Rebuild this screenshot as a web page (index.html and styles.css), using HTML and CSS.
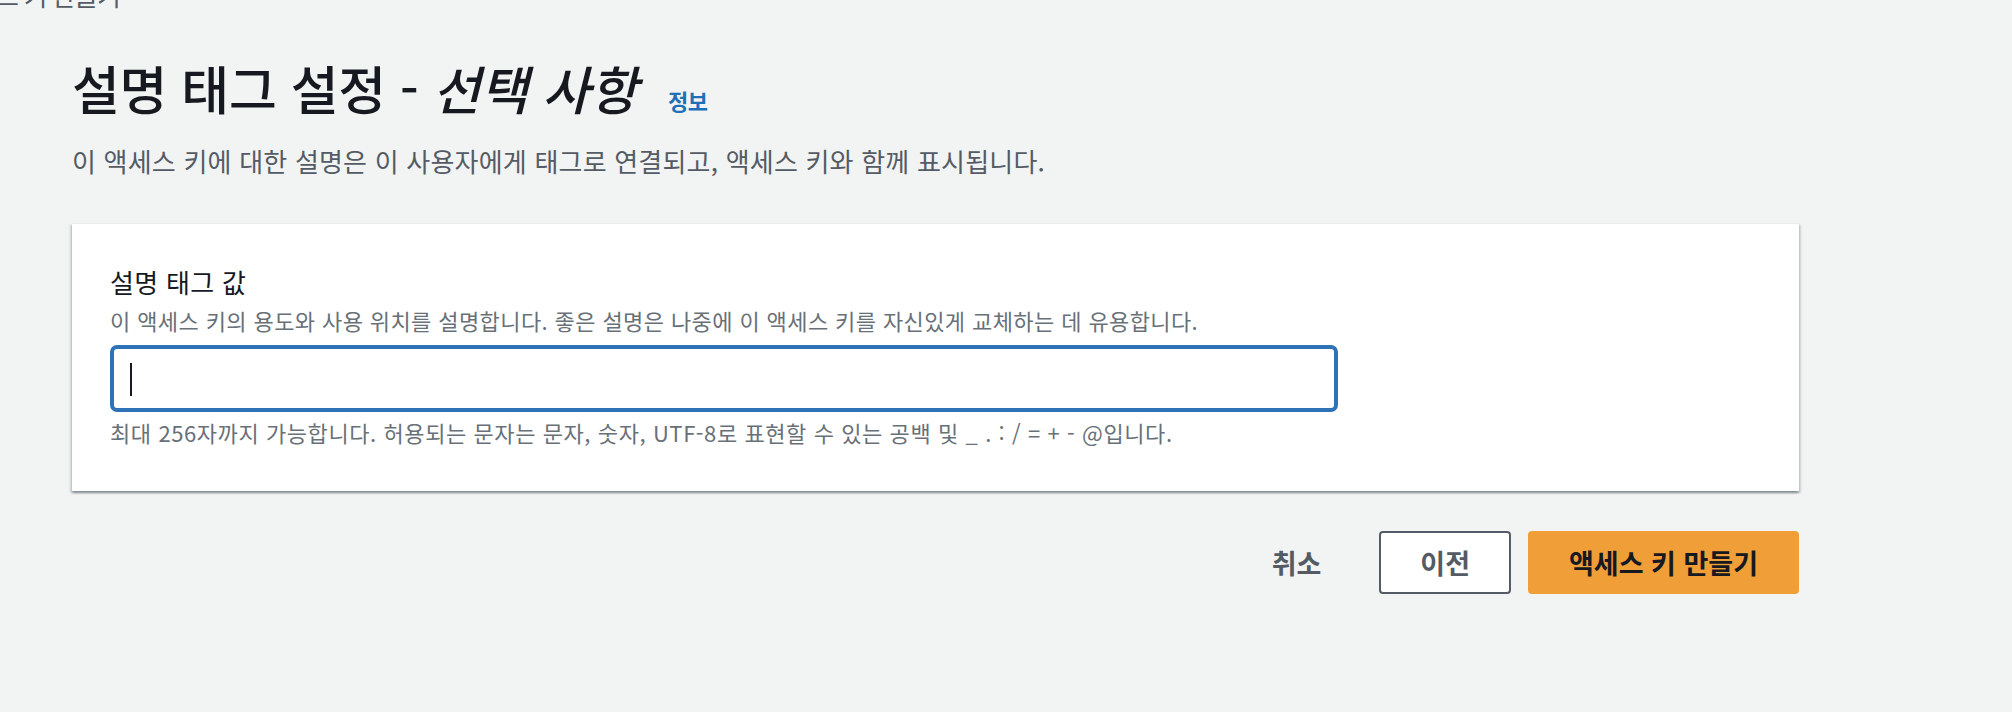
FILE: index.html
```html
<!DOCTYPE html>
<html lang="ko">
<head>
<meta charset="utf-8">
<title>설명 태그 설정</title>
<link rel="stylesheet" href="styles.css">
</head>
<body>
<div class="crumb">액세스 키 만들기</div>
<main class="page">
  <header class="page-header">
    <h1 class="title">설명 태그 설정 - <em class="optional">선택 사항</em><a class="info" href="#">정보</a></h1>
    <p class="lead">이 액세스 키에 대한 설명은 이 사용자에게 태그로 연결되고, 액세스 키와 함께 표시됩니다.</p>
  </header>
  <section class="card">
    <div class="field">
      <label class="label">설명 태그 값</label>
      <p class="desc">이 액세스 키의 용도와 사용 위치를 설명합니다. 좋은 설명은 나중에 이 액세스 키를 자신있게 교체하는 데 유용합니다.</p>
      <div class="input"><span class="caret"></span></div>
      <p class="hint">최대 256자까지 가능합니다. 허용되는 문자는 문자, 숫자, UTF-8로 표현할 수 있는 공백 및 _ . : / = + - @입니다.</p>
    </div>
  </section>
  <div class="actions">
    <button class="btn btn-link" type="button">취소</button>
    <button class="btn btn-normal" type="button">이전</button>
    <button class="btn btn-primary" type="button">액세스 키 만들기</button>
  </div>
</main>
</body>
</html>
```
FILE: styles.css
```css
html, body {
  margin: 0;
  padding: 0;
}
body {
  background: #f2f3f3;
  font-family: "Noto Sans CJK KR", "Noto Sans", sans-serif;
  color: #16191f;
  overflow: hidden;
}
.crumb {
  margin: -21px 0 0 -50px;
  font-size: 26px;
  line-height: 32px;
  letter-spacing: -1.4px;
  color: #545b64;
  white-space: nowrap;
}
.page {
  margin-left: 72px;
  width: 1727px;
}
.page-header {
  padding-top: 45px;
}
.title {
  margin: 0;
  font-size: 52px;
  line-height: 64px;
  font-weight: 500;
  letter-spacing: -0.3px;
  color: #16191f;
}
.optional {
  font-style: italic;
}
.info {
  margin-left: 31px;
  font-size: 22px;
  font-weight: 700;
  color: #1f6fb9;
  text-decoration: none;
  letter-spacing: -0.5px;
}
.lead {
  margin: 11px 0 0;
  font-size: 26px;
  line-height: 36px;
  letter-spacing: 0.2px;
  color: #545b64;
}
.card {
  margin-top: 44px;
  background: #fff;
  border-top: 1px solid #eaeded;
  box-shadow: 0 2px 2px 0 rgba(0, 28, 36, 0.3), 2px 2px 2px 0 rgba(0, 28, 36, 0.12), -2px 2px 2px 0 rgba(0, 28, 36, 0.12);
  padding: 36px 38px 43px;
}
.label {
  display: block;
  font-size: 26px;
  line-height: 44px;
  letter-spacing: 0.3px;
  color: #16191f;
}
.desc {
  margin: 0 0 9px;
  font-size: 22px;
  line-height: 32px;
  letter-spacing: 0.4px;
  color: #687078;
}
.input {
  box-sizing: border-box;
  width: 1228px;
  height: 67px;
  border: 4px solid #2e72b8;
  border-radius: 7px;
  background: #fff;
  display: flex;
  align-items: center;
  padding-left: 16px;
}
.caret {
  display: block;
  width: 2px;
  height: 33px;
  margin-top: 2px;
  background: #16191f;
}
.hint {
  margin: 4px 0 0;
  font-size: 22px;
  line-height: 32px;
  letter-spacing: 0.58px;
  color: #687078;
}
.actions {
  margin-top: 40px;
  display: flex;
  justify-content: flex-end;
  gap: 17px;
}
.btn {
  box-sizing: border-box;
  height: 63px;
  padding: 0 39px;
  border: 2px solid transparent;
  border-radius: 4px;
  font-family: inherit;
  font-size: 27px;
  font-weight: 700;
  cursor: pointer;
}
.btn-link {
  background: transparent;
  color: #545b64;
}
.btn-normal {
  background: #fff;
  border-color: #545b64;
  color: #545b64;
}
.btn-primary {
  background: #f09e38;
  border-color: #f09e38;
  color: #16191f;
  padding: 0 39px;
}
```
